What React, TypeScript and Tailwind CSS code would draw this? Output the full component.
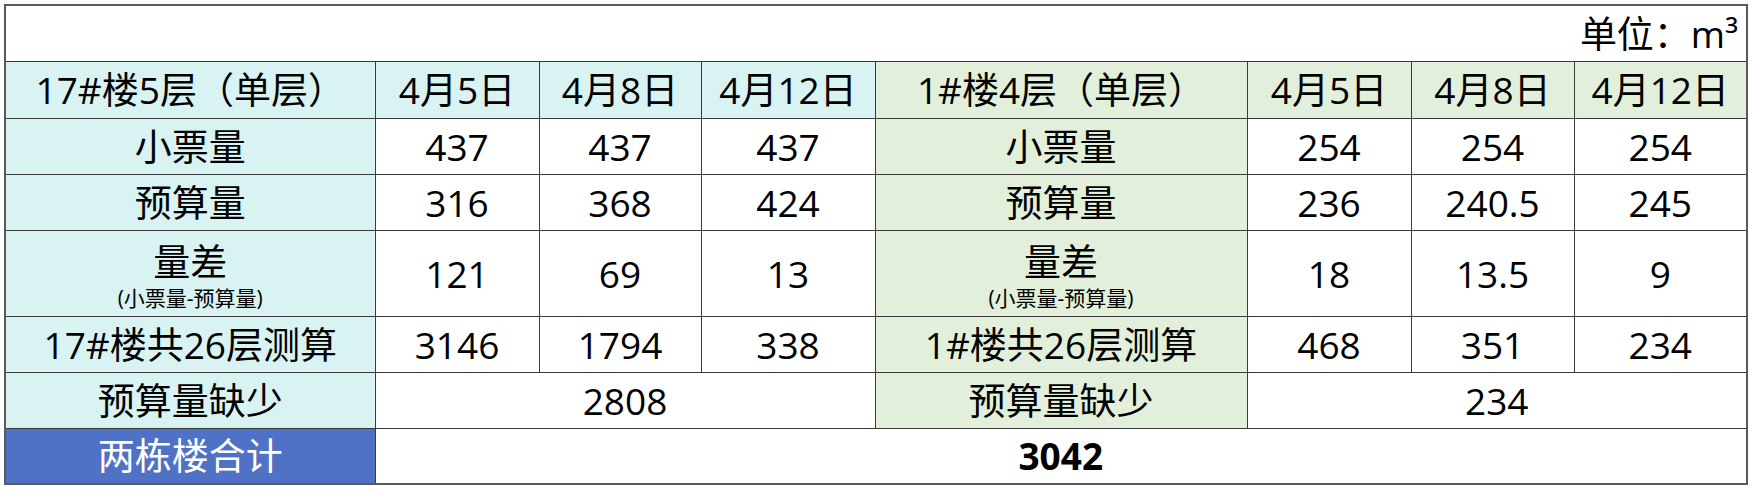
import React from 'react'

const cyan = 'bg-[#d9f2f2]'
const green = 'bg-[#e2efda]'
const cell = 'border border-[#3a3a3a] text-center align-middle p-0'

type Side = {
  title: string
  label: string
  ticket: string[]
  budget: string[]
  diff: string[]
  calc: string[]
  calcLabel: string
  lack: string
  bg: string
}

const sides: Side[] = [
  {
    title: '17#楼5层（单层）',
    label: '17',
    ticket: ['437', '437', '437'],
    budget: ['316', '368', '424'],
    diff: ['121', '69', '13'],
    calc: ['3146', '1794', '338'],
    calcLabel: '17#楼共26层测算',
    lack: '2808',
    bg: cyan,
  },
  {
    title: '1#楼4层（单层）',
    label: '1',
    ticket: ['254', '254', '254'],
    budget: ['236', '240.5', '245'],
    diff: ['18', '13.5', '9'],
    calc: ['468', '351', '234'],
    calcLabel: '1#楼共26层测算',
    lack: '234',
    bg: green,
  },
]

const dates = ['4月5日', '4月8日', '4月12日']

function Values({ values }: { values: string[] }) {
  return (
    <>
      {values.map((v, i) => (
        <td key={i} className={cell}>
          {v}
        </td>
      ))}
    </>
  )
}

export default function App() {
  return (
    <div
      className="min-h-screen bg-white pl-[4px] pt-[4px] text-black"
      style={{ fontFamily: '"Open Sans", "Noto Sans CJK SC", sans-serif' }}
    >
      <table className="w-[1742px] table-fixed border-collapse border-2 border-[#5a5a5a] text-[37px] leading-none">
        <colgroup>
          <col className="w-[370px]" />
          <col className="w-[164px]" />
          <col className="w-[162px]" />
          <col className="w-[174px]" />
          <col className="w-[372px]" />
          <col className="w-[164px]" />
          <col className="w-[163px]" />
          <col className="w-[173px]" />
        </colgroup>
        <tbody>
          <tr className="h-[56px]">
            <td colSpan={8} className="border border-[#3a3a3a] p-0 pr-[8px] text-right align-middle">
              单位：m³
            </td>
          </tr>
          <tr className="h-[57px]">
            {sides.map((s) => (
              <React.Fragment key={s.label}>
                <td className={`${cell} ${s.bg}`}>{s.title}</td>
                {dates.map((d) => (
                  <td key={d} className={`${cell} ${s.bg}`}>
                    {d}
                  </td>
                ))}
              </React.Fragment>
            ))}
          </tr>
          <tr className="h-[56px]">
            {sides.map((s) => (
              <React.Fragment key={s.label}>
                <td className={`${cell} ${s.bg}`}>小票量</td>
                <Values values={s.ticket} />
              </React.Fragment>
            ))}
          </tr>
          <tr className="h-[56px]">
            {sides.map((s) => (
              <React.Fragment key={s.label}>
                <td className={`${cell} ${s.bg}`}>预算量</td>
                <Values values={s.budget} />
              </React.Fragment>
            ))}
          </tr>
          <tr className="h-[86px]">
            {sides.map((s) => (
              <React.Fragment key={s.label}>
                <td className={`${cell} ${s.bg}`}>
                  <div className="flex flex-col items-center">
                    <span className="pt-[6px]">量差</span>
                    <span className="mt-[8px] text-[21px]">(小票量-预算量)</span>
                  </div>
                </td>
                <Values values={s.diff} />
              </React.Fragment>
            ))}
          </tr>
          <tr className="h-[56px]">
            {sides.map((s) => (
              <React.Fragment key={s.label}>
                <td className={`${cell} ${s.bg}`}>{s.calcLabel}</td>
                <Values values={s.calc} />
              </React.Fragment>
            ))}
          </tr>
          <tr className="h-[56px]">
            {sides.map((s) => (
              <React.Fragment key={s.label}>
                <td className={`${cell} ${s.bg}`}>预算量缺少</td>
                <td colSpan={3} className={cell}>
                  {s.lack}
                </td>
              </React.Fragment>
            ))}
          </tr>
          <tr className="h-[56px]">
            <td className={`${cell} bg-[#4f71c6] text-white`}>两栋楼合计</td>
            <td colSpan={7} className={`${cell} font-bold`}>
              3042
            </td>
          </tr>
        </tbody>
      </table>
    </div>
  )
}
